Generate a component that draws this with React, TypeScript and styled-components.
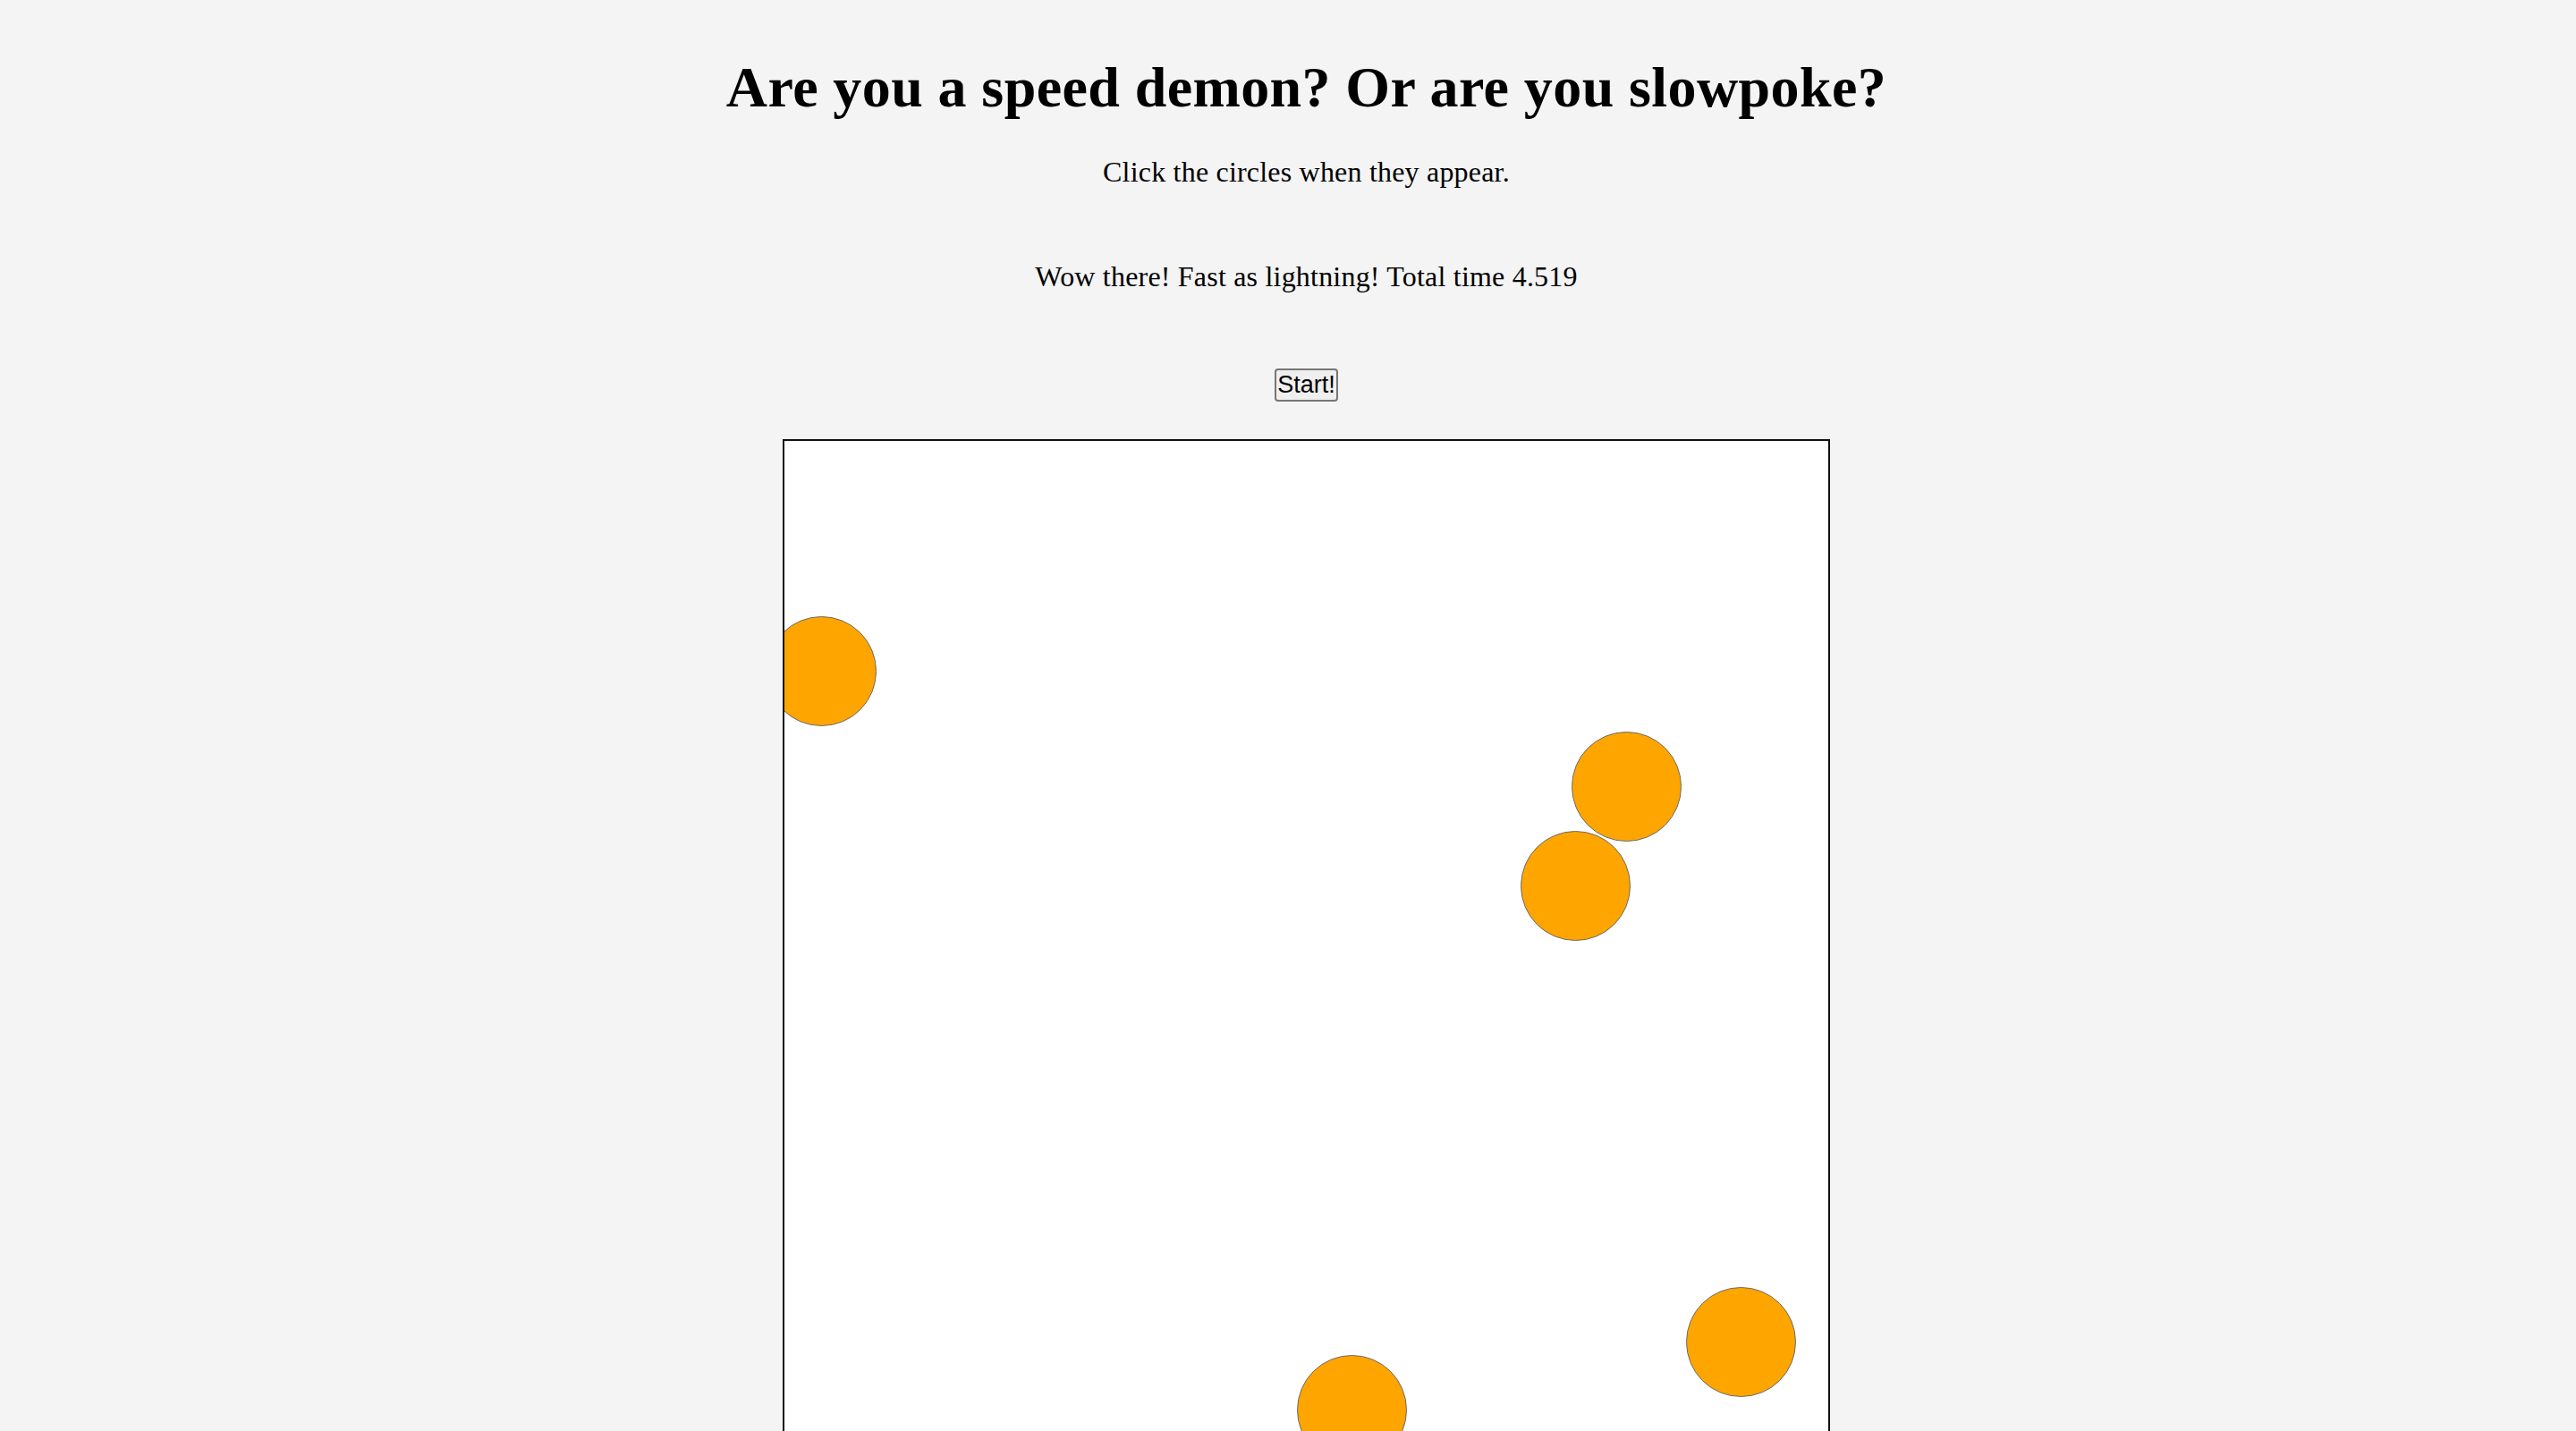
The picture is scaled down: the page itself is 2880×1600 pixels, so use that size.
import React from "react";
import styled, {createGlobalStyle} from "styled-components";

const GlobalStyle = createGlobalStyle`
    html, body {
        margin: 0;
        padding: 0;
        overflow: hidden;
        background-color: #f4f4f4;
    }
`;

const Page = styled.main`
    display: flex;
    flex-direction: column;
    align-items: center;
    padding: 61px 0 0 41px;
    font-family: "Liberation Serif", "Times New Roman", serif;
    color: #000000;
`;

const Title = styled.h1`
    margin: 0;
    font-size: 64px;
    font-weight: 700;
    line-height: 74px;
    letter-spacing: 0.4px;
`;

const Text = styled.p<{ $gap: number }>`
    margin: ${p => p.$gap}px 0 0;
    font-size: 32px;
    line-height: 37px;
    letter-spacing: 0.2px;
`;

const StartButton = styled.button`
    margin-top: 84px;
    height: 37px;
    padding: 0 1.5px;
    font-family: "Liberation Sans", Arial, sans-serif;
    font-size: 27px;
    color: #000000;
    background-color: #efefef;
    border: 2px solid #767676;
    border-radius: 4px;
`;

const Board = styled.div`
    position: relative;
    margin-top: 42px;
    width: 1167px;
    height: 1200px;
    background-color: #ffffff;
    border: 2px solid #111111;
    overflow: hidden;
`;

const Circle = styled.div`
    position: absolute;
    box-sizing: border-box;
    width: 123px;
    height: 123px;
    border-radius: 50%;
    background-color: #ffa500;
    border: 1.5px solid #6b6b6b;
`;

const circles = [
    {x: 41.5, y: 257.5},
    {x: 941.5, y: 386},
    {x: 884.5, y: 497},
    {x: 1069, y: 1007},
    {x: 634, y: 1083},
];

export default function App() {
    return (
        <>
            <GlobalStyle/>
            <Page>
                <Title>Are you a speed demon? Or are you slowpoke?</Title>
                <Text $gap={39}>Click the circles when they appear.</Text>
                <Text $gap={80}>Wow there! Fast as lightning! Total time 4.519</Text>
                <StartButton>Start!</StartButton>
                <Board>
                    {circles.map((c, i) => (
                        <Circle key={i} style={{left: c.x - 61.5, top: c.y - 61.5}}/>
                    ))}
                </Board>
            </Page>
        </>
    );
}
